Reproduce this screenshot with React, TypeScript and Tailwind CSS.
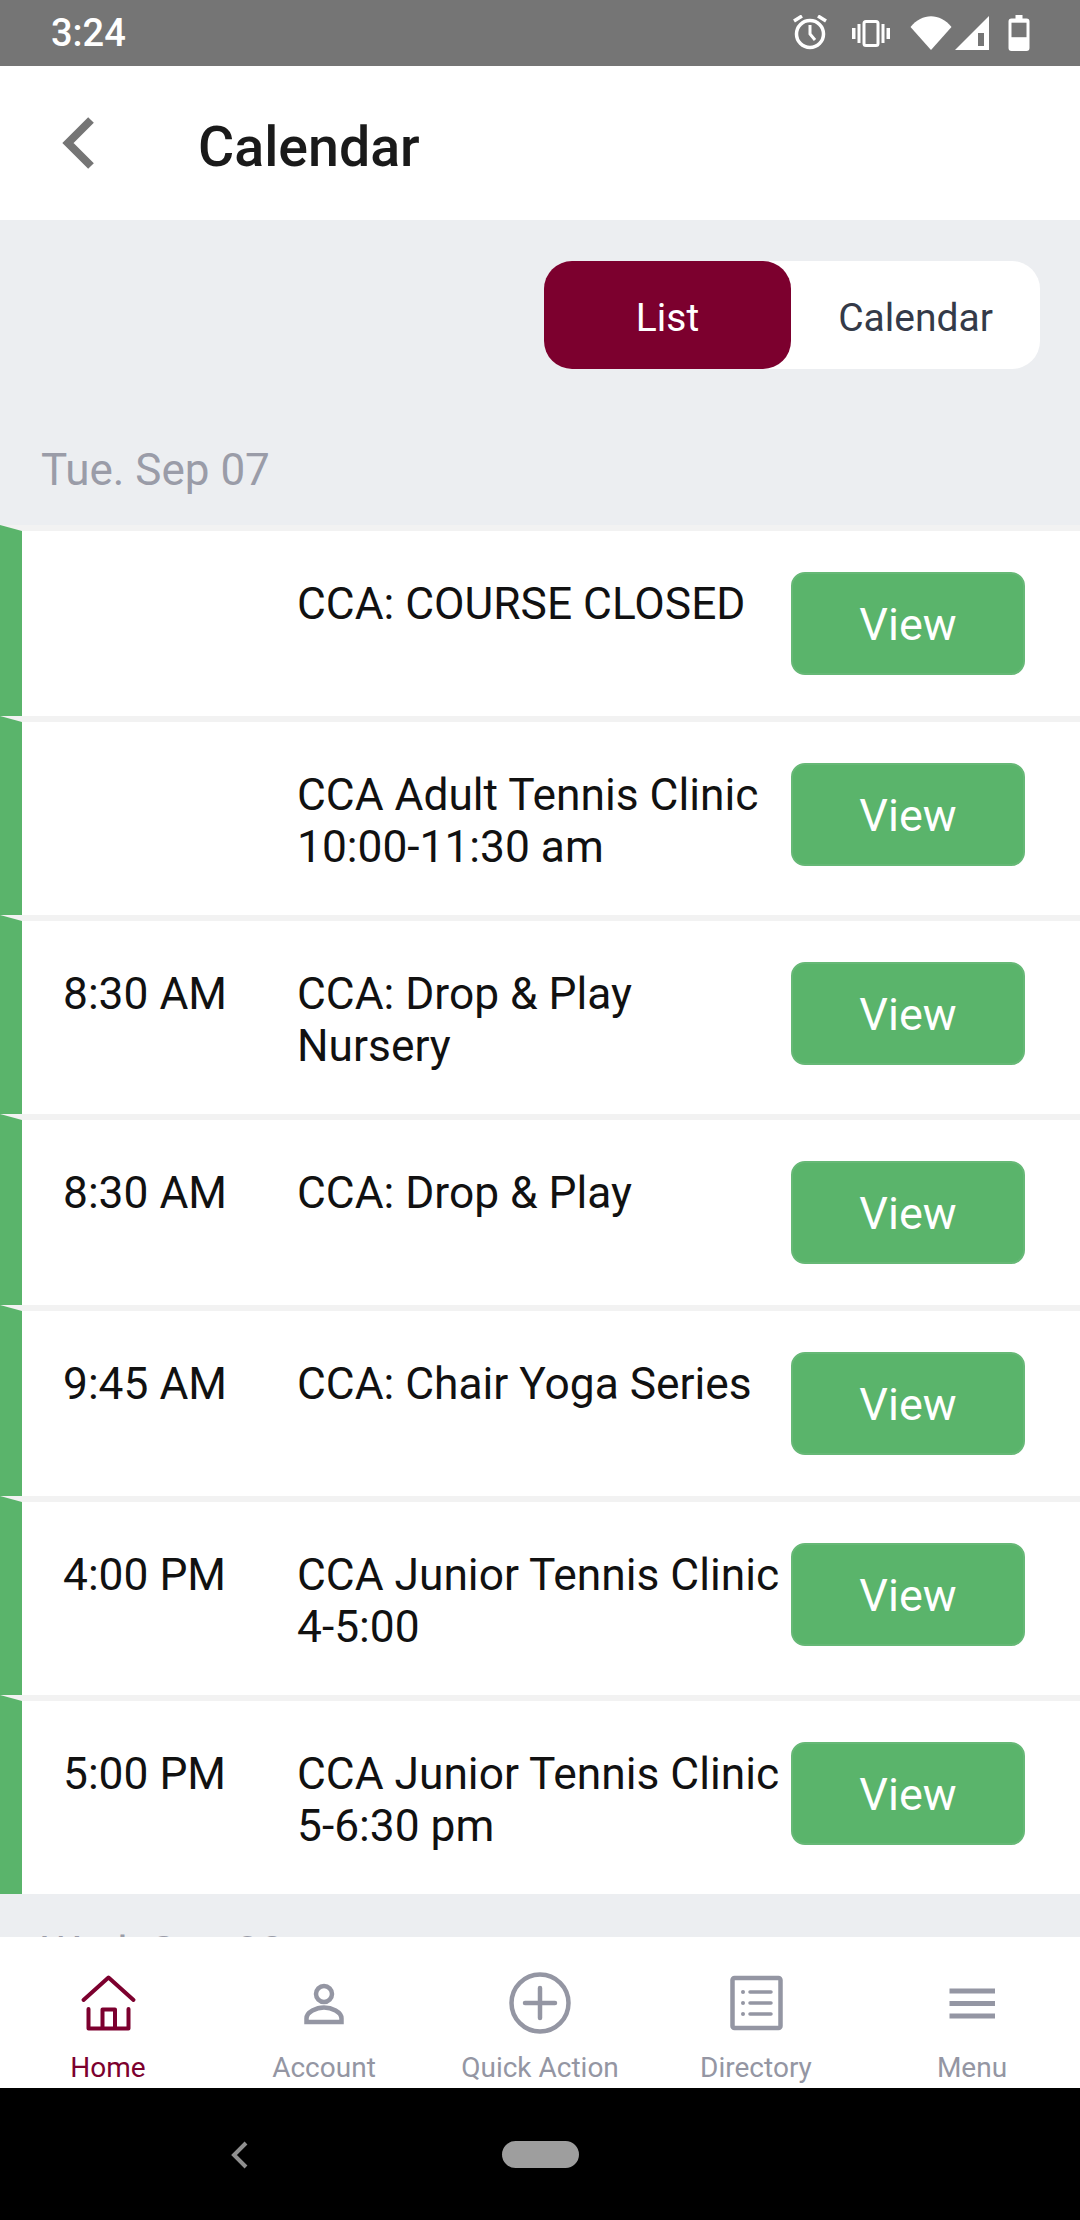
const events = [
  { time: '', lines: ['CCA: COURSE CLOSED'] },
  { time: '', lines: ['CCA Adult Tennis Clinic', '10:00-11:30 am'] },
  { time: '8:30 AM', lines: ['CCA: Drop & Play', 'Nursery'] },
  { time: '8:30 AM', lines: ['CCA: Drop & Play'] },
  { time: '9:45 AM', lines: ['CCA: Chair Yoga Series'] },
  { time: '4:00 PM', lines: ['CCA Junior Tennis Clinic', '4-5:00'] },
  { time: '5:00 PM', lines: ['CCA Junior Tennis Clinic', '5-6:30 pm'] },
];

function StatusIcons() {
  return (
    <div className="flex items-center pr-[50px] text-white">
      <svg width="34" height="36" viewBox="0 0 34 36" className="mr-[25px]" fill="none" stroke="currentColor">
        <circle cx="17" cy="19" r="13.5" strokeWidth="3.5" />
        <path d="M17 10v9l5 6" strokeWidth="3" />
        <path d="M1 6l8-5M33 6l-8-5" strokeWidth="3.5" />
      </svg>
      <svg width="38" height="27" viewBox="0 0 38 27" className="mr-[20px]" fill="currentColor">
        <rect x="0" y="8" width="3.5" height="11" />
        <rect x="5.5" y="4" width="3" height="19" />
        <rect x="29.5" y="4" width="3" height="19" />
        <rect x="34.5" y="8" width="3.5" height="11" />
        <rect x="12" y="1.5" width="14" height="24" rx="2" fill="none" stroke="currentColor" strokeWidth="3" />
      </svg>
      <svg width="42" height="34" viewBox="0 0 42 34" className="mr-[3px]" fill="currentColor">
        <path d="M0.5 11C12-3.5 30-3.5 41.5 11L21 34Z" />
      </svg>
      <svg width="35" height="34" viewBox="0 0 35 34" className="mr-[18px]">
        <path d="M0 34L34 0V34Z" fill="currentColor" />
        <rect x="23" y="17" width="6" height="13" fill="#757575" />
      </svg>
      <svg width="22" height="36" viewBox="0 0 22 36">
        <path d="M7.500 0h7v3.500h4a3 3 0 0 1 3 3V33a3 3 0 0 1-3 3h-15a3 3 0 0 1-3-3V6.500a3 3 0 0 1 3-3h4Z" fill="currentColor" />
        <rect x="3.500" y="7.700" width="15" height="14.500" fill="#757575" />
      </svg>
    </div>
  );
}

function HomeIcon() {
  return (
    <svg width="60" height="60" viewBox="0 0 60 60" fill="none" stroke="currentColor" strokeLinecap="round" strokeLinejoin="round">
      <path d="M5.500 27L30.500 4.500L55.500 27" strokeWidth="4" />
      <path d="M10.500 36V55.500H50.500V36" strokeWidth="4" />
      <path d="M24.500 55V36.500H37V55" strokeWidth="4" />
    </svg>
  );
}

function AccountIcon() {
  return (
    <svg width="60" height="60" viewBox="0 0 60 60" fill="none" stroke="currentColor">
      <circle cx="30" cy="21" r="8" strokeWidth="4.500" />
      <path d="M12.500 49v-3.500c0-6.500 10-11 17.500-11s17.500 4.500 17.500 11V49Z" strokeWidth="4.500" />
    </svg>
  );
}

function QuickIcon() {
  return (
    <svg width="62" height="62" viewBox="0 0 62 62" fill="none" stroke="currentColor" strokeWidth="4.500" strokeLinecap="round">
      <circle cx="31" cy="31" r="28.500" />
      <path d="M16 31h30M31 16v30" />
    </svg>
  );
}

function DirectoryIcon() {
  return (
    <svg width="60" height="60" viewBox="0 0 60 60" fill="none" stroke="currentColor" strokeLinecap="round">
      <rect x="6.500" y="5" width="48" height="50" rx="2" strokeWidth="4.500" />
      <path d="M24 19h21M24 30h21M24 41h21" strokeWidth="3.500" />
      <circle cx="17" cy="19" r="2" fill="currentColor" stroke="none" />
      <circle cx="17" cy="30" r="2" fill="currentColor" stroke="none" />
      <circle cx="17" cy="41" r="2" fill="currentColor" stroke="none" />
    </svg>
  );
}

function MenuIcon() {
  return (
    <svg width="60" height="60" viewBox="0 0 60 60" fill="none" stroke="currentColor" strokeWidth="5">
      <path d="M7.500 18h45.500M7.500 30.500h45.500M7.500 43h45.500" />
    </svg>
  );
}

const tabs = [
  { label: 'Home', Icon: HomeIcon, active: true },
  { label: 'Account', Icon: AccountIcon, active: false },
  { label: 'Quick Action', Icon: QuickIcon, active: false },
  { label: 'Directory', Icon: DirectoryIcon, active: false },
  { label: 'Menu', Icon: MenuIcon, active: false },
];

export default function App() {
  return (
    <div className="flex h-[2220px] w-[1080px] flex-col overflow-hidden bg-white font-['Roboto',sans-serif]">
      <div className="flex h-[66px] shrink-0 items-center justify-between bg-[#757575] pl-[51px]">
        <span className="text-[38px] font-medium leading-none text-white">3:24</span>
        <StatusIcons />
      </div>

      <div className="flex h-[154px] shrink-0 items-center bg-white">
        <svg width="36" height="52" viewBox="0 0 36 52" className="ml-[60px]" fill="none" stroke="#757575" strokeWidth="8">
          <path d="M31 3L8 26L31 49" />
        </svg>
        <h1 className="ml-[102px] mt-[9px] text-[55.5px] font-medium leading-none text-[#1a1a1a]">Calendar</h1>
      </div>

      <main className="min-h-0 flex-1 overflow-hidden bg-[#eceef1]">
        <div className="mr-[40px] mt-[41px] flex justify-end">
          <div className="flex h-[108px] w-[496px] rounded-[28px] bg-white text-[39px]">
            <div className="flex w-[247px] items-center justify-center rounded-[28px] bg-[#7c002e] pt-[6px] text-white">List</div>
            <div className="flex flex-1 items-center justify-center pt-[6px] text-[#343a48]">Calendar</div>
          </div>
        </div>

        <p className="ml-[41px] mt-[76px] mb-[30px] text-[44px] leading-[50px] text-[#9a9ca8]">Tue. Sep 07</p>

        {events.map((ev, i) => (
          <div
            key={i}
            className="flex items-start border-l-[22px] border-t-[6px] border-l-[#5ab46b] border-t-[#f2f2f2] bg-white py-[41px] pl-[41px] text-[44.3px] leading-[52px] text-[#111111]"
          >
            <div className="mt-[6px] w-[234px] shrink-0">{ev.time}</div>
            <div className="mb-[1px] mt-[6px] w-[494px] shrink-0 whitespace-nowrap">
              {ev.lines.map((line) => (
                <div key={line}>{line}</div>
              ))}
            </div>
            <button className="flex h-[103px] w-[234px] shrink-0 items-center justify-center rounded-[14px] border-2 border-[#66b876] bg-[#5ab46b] pt-[3px] text-[45px] text-white">
              View
            </button>
          </div>
        ))}

        <p className="ml-[41px] mt-[34px] text-[44px] leading-[50px] text-[#9a9ca8]">Wed. Sep 08</p>
      </main>

      <nav className="grid h-[151px] shrink-0 grid-cols-5 overflow-hidden bg-white pt-[34px]">
        {tabs.map(({ label, Icon, active }) => (
          <div key={label} className={`flex flex-col items-center ${active ? 'text-[#7c002e]' : 'text-[#9496a3]'}`}>
            <div className="flex h-[64px] items-center justify-center">
              <Icon />
            </div>
            <span className="mt-[16px] text-[28px] leading-[34px]">{label}</span>
          </div>
        ))}
      </nav>

      <div className="flex h-[132px] shrink-0 items-start bg-black pt-[53px]">
        <svg width="20" height="28" viewBox="0 0 20 28" className="ml-[229px]" fill="none" stroke="#8f8f8f" strokeWidth="4">
          <path d="M17 2L5 14L17 26" />
        </svg>
        <div className="ml-[253px] h-[27px] w-[77px] rounded-full bg-[#9e9e9e]" />
      </div>
    </div>
  );
}
